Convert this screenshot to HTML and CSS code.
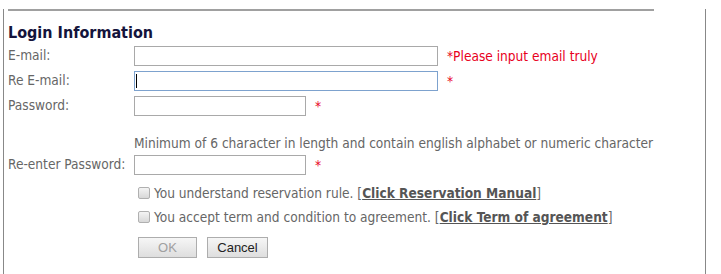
FILE: index.html
```html
<!DOCTYPE html>
<html lang="en">
<head>
    <meta charset="UTF-8">
    <meta name="viewport" content="width=device-width, initial-scale=1.0">
    <title>Login Information</title>
    <link rel="stylesheet" href="styles.css">
</head>
<body>
    <div class="frame">
        <hr class="rule">
        <h2 class="title">Login Information</h2>

        <form action="" id="loginform" class="grid">
            <label for="email">E-mail:</label>
            <div class="field">
                <input type="text" id="email" class="wide">
                <span class="req">*Please input email truly</span>
            </div>

            <label for="remail">Re E-mail:</label>
            <div class="field">
                <span class="caret-wrap">
                    <input type="text" id="remail" class="wide focus">
                    <span class="caret"></span>
                </span>
                <span class="req">*</span>
            </div>

            <label for="pass">Password:</label>
            <div class="field">
                <input type="password" id="pass" class="short">
                <span class="req">*</span>
            </div>

            <span></span>
            <p class="hint">Minimum of 6 character in length and contain english alphabet or numeric character</p>

            <label for="repass">Re-enter Password:</label>
            <div class="field">
                <input type="password" id="repass" class="short">
                <span class="req">*</span>
            </div>

            <span></span>
            <div class="checks">
                <p class="check"><span class="box"></span>You understand reservation rule. [<a href="#">Click Reservation Manual</a>]</p>
                <p class="check"><span class="box"></span>You accept term and condition to agreement. [<a href="#">Click Term of agreement</a>]</p>
                <div class="buttons">
                    <button type="button" class="btn ok">OK</button>
                    <button type="button" class="btn">Cancel</button>
                </div>
            </div>
        </form>
    </div>
</body>
</html>
```

FILE: styles.css
```css
* {
    margin: 0;
    padding: 0;
    box-sizing: border-box;
}
body {
    font-family: "DejaVu Sans Condensed", "DejaVu Sans", sans-serif;
    font-size: 13.6px;
    color: #666;
    background: #fff;
}
.frame {
    margin-left: 3px;
    width: 703px;
    height: 274px;
    border-left: 1px solid #888;
    border-right: 1px solid #888;
    padding-left: 4px;
}
.rule {
    border: none;
    border-top: 2px solid #a0a0a0;
    width: 646px;
    margin-top: 9px;
}
.title {
    font-size: 16px;
    font-weight: bold;
    color: #14143c;
    margin-top: 12px;
    line-height: 20px;
}
.grid {
    display: grid;
    grid-template-columns: 126px auto;
    align-items: center;
}
.grid label {
    line-height: 25px;
}
.field {
    display: flex;
    align-items: center;
    height: 25px;
}
input {
    height: 20px;
    border: 1px solid #a9a9a9;
    font: inherit;
    outline: none;
}
.wide {
    width: 304px;
}
.short {
    width: 172px;
}
.focus {
    border-color: #7da2ce;
}
.caret-wrap {
    position: relative;
    display: flex;
}
.caret {
    position: absolute;
    left: 2px;
    top: 3px;
    width: 1px;
    height: 14px;
    background: #000;
}
.req {
    color: #e8001c;
    margin-left: 9px;
}
.hint {
    margin-top: 16px;
    line-height: 18px;
}
.checks {
    padding-left: 4px;
    padding-top: 4px;
}
.check {
    display: flex;
    align-items: center;
    line-height: 24px;
}
.box {
    width: 12px;
    height: 12px;
    border: 1px solid #b0b0b0;
    border-radius: 2px;
    background: linear-gradient(#f4f4f4, #d8d8d8);
    margin-right: 4px;
}
.check a {
    color: #555;
    font-weight: bold;
}
.buttons {
    display: flex;
    gap: 10px;
    margin-top: 8px;
}
.btn {
    height: 21px;
    width: 61px;
    font-family: "Liberation Sans", Arial, sans-serif;
    font-size: 13px;
    color: #222;
    border: 1px solid #adadad;
    background: linear-gradient(#f6f6f6, #dedede);
}
.btn.ok {
    width: 59px;
    color: #a0a0a0;
}
```
